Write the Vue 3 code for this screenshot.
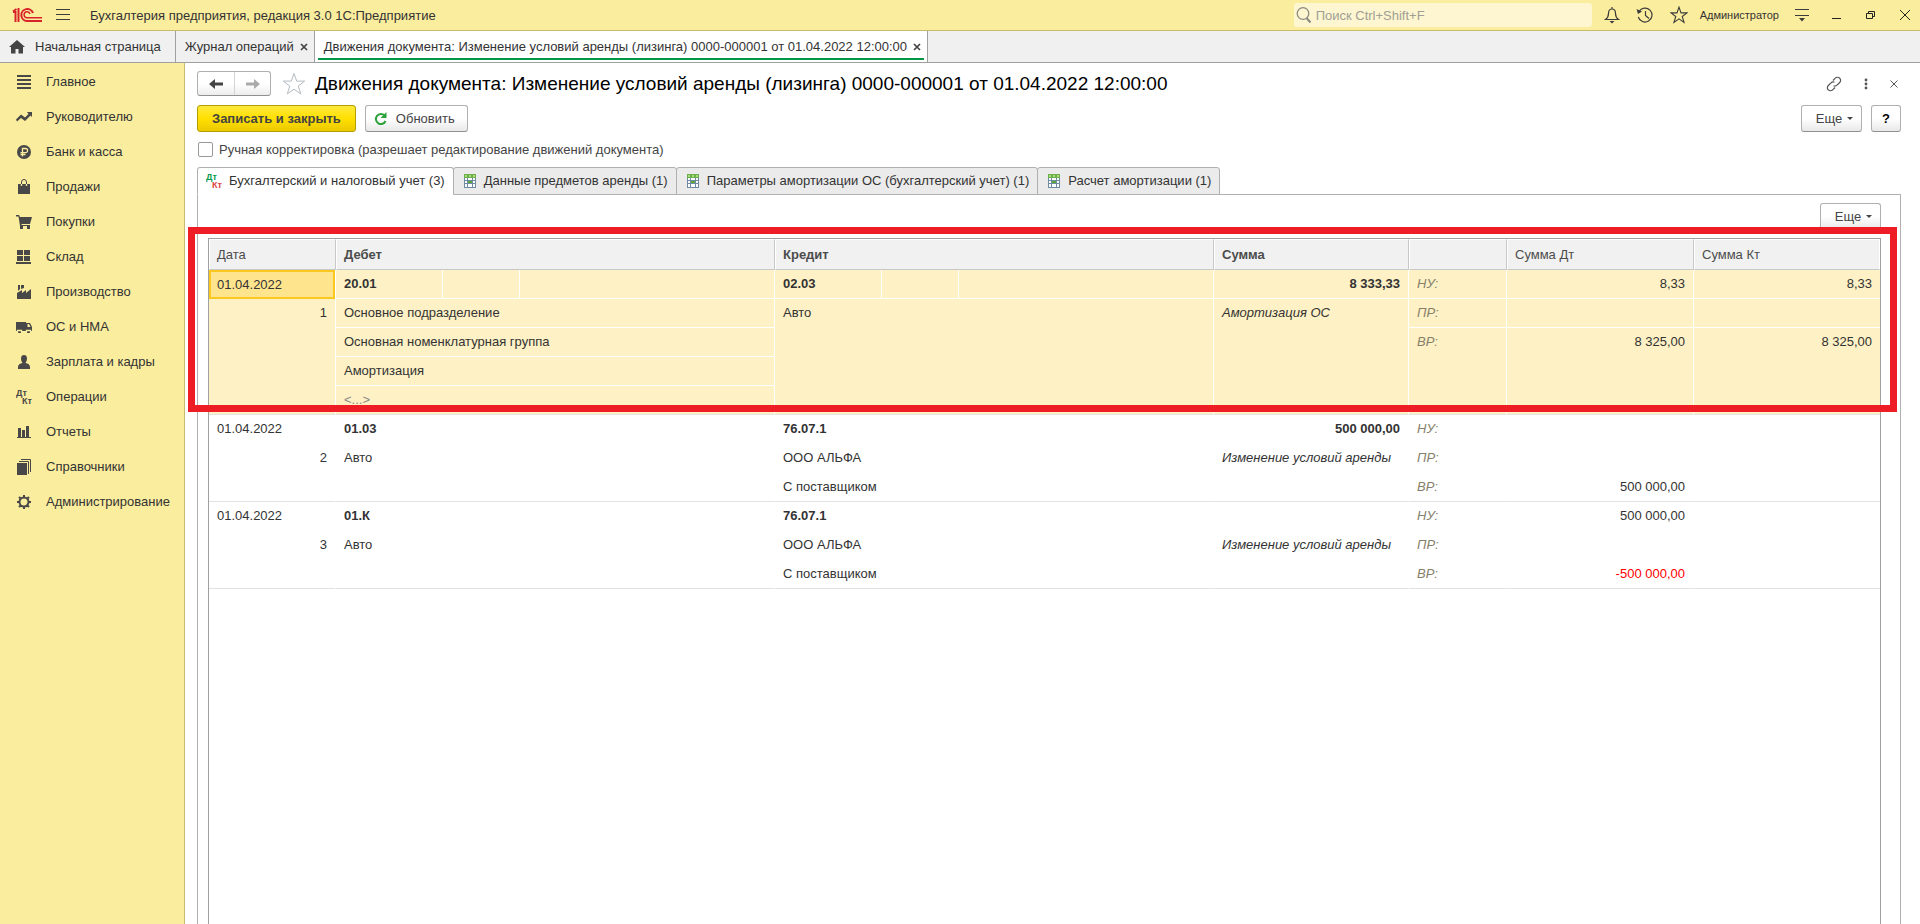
<template>
  <div class="app">
    <header class="titlebar">
      <svg class="logo" viewBox="0 0 30 16" fill="none" stroke="#d8232a" stroke-width="2">
        <path d="M1 4.500L4.500 2M6.500 1v14M1 5h2.500v10" />
        <path d="M21 6a6 6 0 1 0-6 8H30" />
        <path d="M18 7a3 3 0 1 0-3 3.800H30" stroke-width="1.500" />
      </svg>
      <button class="plain" aria-label="Меню">
        <svg width="14" height="12" viewBox="0 0 14 12" stroke="#3c3c3c" stroke-width="1">
          <path d="M0 .5h14M0 5.500h14M0 10.500h14" />
        </svg>
      </button>
      <span class="app-name">Бухгалтерия предприятия, редакция 3.0 1С:Предприятие</span>
      <label class="search">
        <svg width="16" height="18" viewBox="0 0 16 18" fill="none" stroke="#8c8a80" stroke-width="1.300">
          <circle cx="7" cy="7.500" r="5.800" />
          <path d="M10.500 12l4 4.500" stroke-width="2" />
        </svg>
        <input v-model="search" type="text" placeholder="Поиск Ctrl+Shift+F" aria-label="Поиск" />
      </label>
      <div class="tools">
        <button class="plain" aria-label="Уведомления">
          <svg width="16" height="18" viewBox="0 0 16 18" fill="none" stroke="#3c3c3c" stroke-width="1.200">
            <path d="M1.500 13.500c2-1.500 3-3 3-6C4.500 4.500 6 3 8 3s3.500 1.500 3.500 4.500c0 3 1 4.500 3 6zM8 3V1" />
            <path d="M5.500 15h5L8 17.500z" fill="#3c3c3c" stroke="none" />
          </svg>
        </button>
        <button class="plain" aria-label="История">
          <svg width="18" height="18" viewBox="0 0 18 18" fill="none" stroke="#3c3c3c" stroke-width="1.200">
            <path d="M3 5.500a7 7 0 1 1-.7 5.500M9.500 5v4.500l3.500 3" />
            <path d="M.5 3l1.500 5 4-2.500z" fill="#3c3c3c" stroke="none" />
          </svg>
        </button>
        <button class="plain" aria-label="Избранное">
          <svg width="18" height="18" viewBox="0 0 24 24" fill="none" stroke="#3c3c3c" stroke-width="1.500">
            <path :d="star" />
          </svg>
        </button>
        <a class="user" href="#">Администратор</a>
        <button class="plain" aria-label="Настройки">
          <svg width="14" height="14" viewBox="0 0 14 14">
            <path d="M0 1h14v1H0zM0 7h14v1H0zM4 10h6l-3 3.500z" fill="#3c3c3c" />
          </svg>
        </button>
      </div>
      <div class="window-buttons">
        <button class="plain" aria-label="Свернуть">
          <svg width="10" height="10" viewBox="0 0 10 10"><path d="M0 8h9v1H0z" fill="#222" /></svg>
        </button>
        <button class="plain" aria-label="Развернуть">
          <svg width="10" height="10" viewBox="0 0 10 10" fill="none" stroke="#222">
            <path d="M.5 3.500h6v5h-6zM2.500 3V1.500h6v5H7" />
          </svg>
        </button>
        <button class="plain" aria-label="Закрыть">
          <svg width="10" height="10" viewBox="0 0 10 10" stroke="#222"><path d="M0 0l10 10M10 0L0 10" /></svg>
        </button>
      </div>
    </header>

    <nav class="tabs">
      <a class="tab home" href="#">
        <svg width="16" height="14" viewBox="0 0 16 14">
          <path d="M8 0l8 7h-2v6.500H9.500V9h-3v4.500H2V7H0z" fill="#444" />
        </svg>
        Начальная страница
      </a>
      <div v-for="tab in openTabs" :key="tab.title" class="tab" :class="{ current: tab.current }">
        <a href="#">{{ tab.title }}</a>
        <button class="plain" aria-label="Закрыть вкладку">
          <svg width="8" height="8" viewBox="0 0 8 8" stroke="#444" stroke-width="1.700"><path d="M1 1l6 6M7 1L1 7" /></svg>
        </button>
      </div>
    </nav>

    <div class="body">
      <aside class="sidebar">
        <a v-for="item in menu" :key="item.title" href="#">
          <svg width="16" height="16" viewBox="0 0 16 16">
            <template v-if="item.dtkt">
              <text x="0" y="7" class="dtkt">Дт</text>
              <text x="6" y="15" class="dtkt">Кт</text>
            </template>
            <path v-if="item.fill" :d="item.fill" fill="#484848" fill-rule="evenodd" />
            <path v-if="item.line" :d="item.line" fill="none" stroke="#484848" :stroke-width="item.width || 1" />
            <path v-if="item.cut" :d="item.cut" fill="none" stroke="#fbed9e" stroke-width="1.300" />
          </svg>
          {{ item.title }}
        </a>
      </aside>

      <main class="content">
        <div class="heading">
          <div class="history">
            <button aria-label="Назад">
              <svg width="14" height="10" viewBox="0 0 14 10"><path d="M0 5l6-5v3.500h8v3H6V10z" fill="#444" /></svg>
            </button>
            <button aria-label="Вперед">
              <svg width="14" height="10" viewBox="0 0 14 10"><path d="M14 5L8 0v3.500H0v3h8V10z" fill="#aaa" /></svg>
            </button>
          </div>
          <button class="plain" aria-label="В избранное">
            <svg width="24" height="24" viewBox="0 0 24 24" fill="none" stroke="#b4bac0"><path :d="star" /></svg>
          </button>
          <h1>{{ title }}</h1>
          <div class="form-tools">
            <button class="plain" aria-label="Ссылка">
              <svg width="16" height="16" viewBox="0 0 16 16" fill="none" stroke="#555" stroke-width="1.200">
                <path d="M7 4.500l2.300-2.300a3 3 0 0 1 4.400 0 3 3 0 0 1 0 4.300L11 9.200a3 3 0 0 1-3.500.5" />
                <path d="M9 11.500l-2.300 2.300a3 3 0 0 1-4.400 0 3 3 0 0 1 0-4.300L5 6.800a3 3 0 0 1 3.500-.5" />
              </svg>
            </button>
            <button class="plain" aria-label="Еще действия">
              <svg width="4" height="12" viewBox="0 0 4 12" fill="#555">
                <circle cx="2" cy="2" r="1.400" /><circle cx="2" cy="6" r="1.400" /><circle cx="2" cy="10" r="1.400" />
              </svg>
            </button>
            <button class="plain" aria-label="Закрыть форму">
              <svg width="8" height="8" viewBox="0 0 8 8" stroke="#555"><path d="M.5.5l7 7M7.500.5l-7 7" /></svg>
            </button>
          </div>
        </div>

        <div class="commands">
          <button class="btn primary">Записать и закрыть</button>
          <button class="btn refresh">
            <svg width="14" height="14" viewBox="0 0 14 14">
              <path d="M10.500 3.500A5 5 0 1 0 11.500 9" fill="none" stroke="#2ba33a" stroke-width="2" />
              <path d="M12.500 0v6h-6z" fill="#2ba33a" />
            </svg>
            Обновить
          </button>
          <button class="btn more">Еще <i class="caret"></i></button>
          <button class="btn help">?</button>
        </div>

        <label class="manual">
          <input v-model="manual" type="checkbox" />
          Ручная корректировка (разрешает редактирование движений документа)
        </label>

        <div class="registers" role="tablist">
          <button
            v-for="(reg, i) in registers"
            :key="reg"
            role="tab"
            :class="{ active: activeRegister === i }"
            @click="activeRegister = i"
          >
            <svg v-if="i === 0" width="18" height="16" viewBox="0 0 18 16">
              <text x="0" y="7" class="dtkt" fill="#0a9a4a">Дт</text>
              <text x="6" y="15" class="dtkt" fill="#dc4444">Кт</text>
            </svg>
            <svg v-else width="14" height="14" viewBox="0 0 14 14">
              <path d="M1 0h12v14H1z" fill="#6f8ba3" />
              <path d="M1 0h12v4H1z" fill="#6cae48" />
              <path d="M2 1h2v2H2zM6 1h2v2H6zM10 1h2v2h-2z" fill="#a9dc80" />
              <path d="M2 4h2v2H2zM5 4h4v2H5zM10 4h2v2h-2zM2 7h2v2H2zM10 7h2v2h-2zM2 10h2v3H2zM5 10h4v3H5zM10 10h2v3h-2z" fill="#fff" />
              <path d="M5 7h4v2H5z" fill="#5aa83c" />
            </svg>
            {{ reg }}
          </button>
        </div>

        <section class="panel">
          <div class="panel-commands">
            <button class="btn more">Еще <i class="caret"></i></button>
          </div>
          <div class="grid">
            <table>
              <colgroup>
                <col class="c-date" />
                <col />
                <col />
                <col class="c-sum" />
                <col class="c-kind" />
                <col class="c-amount" />
                <col class="c-last" />
              </colgroup>
              <thead>
                <tr>
                  <th>Дата</th>
                  <th class="strong">Дебет</th>
                  <th class="strong">Кредит</th>
                  <th class="strong">Сумма</th>
                  <th></th>
                  <th>Сумма Дт</th>
                  <th>Сумма Кт</th>
                </tr>
              </thead>
              <tbody>
                <tr v-for="row in entries" :key="row.n" :class="{ selected: selected === row.n }" @click="selected = row.n">
                  <td>
                    <div class="line date">{{ row.date }}</div>
                    <div class="line num last">{{ row.n }}</div>
                  </td>
                  <td v-for="(side, s) in [row.debit, row.credit]" :key="s">
                    <div class="line account"><b>{{ side[0] }}</b><span></span><span></span></div>
                    <div
                      v-for="(text, i) in side.slice(1)"
                      :key="i"
                      class="line"
                      :class="{ last: i === side.length - 2, blank: text === '<...>' }"
                    >{{ text }}</div>
                  </td>
                  <td>
                    <div class="line num"><b>{{ row.sum }}</b></div>
                    <div class="line last"><em>{{ row.note }}</em></div>
                  </td>
                  <td>
                    <div class="line kind">НУ:</div>
                    <div class="line kind">ПР:</div>
                    <div class="line kind last">ВР:</div>
                  </td>
                  <td v-for="(col, c) in [row.dt, row.kt]" :key="'a' + c">
                    <div
                      v-for="(value, i) in col"
                      :key="i"
                      class="line num"
                      :class="{ last: i === 2, negative: value.startsWith('-') }"
                    >{{ value }}</div>
                  </td>
                </tr>
              </tbody>
            </table>
            <div class="highlight"></div>
          </div>
        </section>
      </main>
    </div>
  </div>
</template>

<script setup>
import { ref } from 'vue';

const title = 'Движения документа: Изменение условий аренды (лизинга) 0000-000001 от 01.04.2022 12:00:00';
const star = 'M12 1.500l2.700 7.600h8l-6.400 4.900 2.400 7.900L12 17.200l-6.700 4.700 2.400-7.900L1.300 9.100h8z';

const search = ref('');
const manual = ref(false);
const activeRegister = ref(0);
const selected = ref(1);

const openTabs = [
  { title: 'Журнал операций' },
  { title, current: true }
];

// fill - заливка, line - контур, cut - линии цветом фона
const menu = [
  { title: 'Главное', fill: 'M1 1h14v2H1zM1 5h14v2H1zM1 9h14v2H1zM1 13h14v2H1z' },
  { title: 'Руководителю', fill: 'M0 10.500l5-5 4 3 3.500-3.500L11 3h5v5l-1.500-1.500L9 12 5 9l-4 3.500z' },
  { title: 'Банк и касса', fill: 'M8 1a7 7 0 1 0 0 14A7 7 0 0 0 8 1z', cut: 'M6.500 12.500V4.500h3a2 2 0 0 1 0 4.200H4.500M4.500 10.500h5' },
  { title: 'Продажи', fill: 'M2 5h12v10H2z', line: 'M5.500 5V3a2.500 2.500 0 0 1 5 0v2', cut: 'M5.500 5v2M10.500 5v2' },
  { title: 'Покупки', fill: 'M0 1h3l1 2h12l-2 7H5.500v1H14v1H4L2.500 2.500H0zM4 12h3v3H4zM11 12h3v3h-3z' },
  { title: 'Склад', fill: 'M1 1h6v5H1zM8 1h6v5H8zM1 7h6v5H1zM8 7h6v5H8zM0 13h15v2H0z' },
  { title: 'Производство', fill: 'M1 15V9l5-3v3l4-3v3l5-4v10zM2 1h2v4l-2 2zM5 1h3v3L5 5z' },
  { title: 'ОС и НМА', fill: 'M0 3h10v9H0zM10 4h4l2 4v4h-6zM11.500 5v3h3L13 5zM2 11h3v3H2zM11 11h3v3h-3z', cut: 'M1.500 13.500v-2h4v2M10.500 13.500v-2h4v2' },
  { title: 'Зарплата и кадры', fill: 'M8 1c2 0 3 1.500 3 3.500S10 8.500 9.500 9c2.500.5 4.500 1.500 4.500 4v2H2v-2c0-2.500 2-3.500 4.500-4C6 8.500 5 6.500 5 4.500S6 1 8 1z' },
  { title: 'Операции', dtkt: true },
  { title: 'Отчеты', fill: 'M2 4h3v9H2zM6 6h3v7H6zM10 2h3v11h-3zM1 13h14v1H1z' },
  { title: 'Справочники', fill: 'M1 4h10v12H1z', line: 'M3 2.500h9.500V15M5 .5h9.500V13' },
  { title: 'Администрирование', line: 'M8 3.500a4.500 4.500 0 1 0 0 9 4.500 4.500 0 0 0 0-9zM8 1v2.500M8 12.500V15M1 8h2.500M12.500 8H15M3 3l2 2M11 11l2 2M13 3l-2 2M5 11l-2 2', width: 2 }
];

const registers = [
  'Бухгалтерский и налоговый учет (3)',
  'Данные предметов аренды (1)',
  'Параметры амортизации ОС (бухгалтерский учет) (1)',
  'Расчет амортизации (1)'
];

const entries = [
  {
    n: 1,
    date: '01.04.2022',
    debit: ['20.01', 'Основное подразделение', 'Основная номенклатурная группа', 'Амортизация', '<...>'],
    credit: ['02.03', 'Авто'],
    sum: '8 333,33',
    note: 'Амортизация ОС',
    dt: ['8,33', '', '8 325,00'],
    kt: ['8,33', '', '8 325,00']
  },
  {
    n: 2,
    date: '01.04.2022',
    debit: ['01.03', 'Авто'],
    credit: ['76.07.1', 'ООО АЛЬФА', 'С поставщиком'],
    sum: '500 000,00',
    note: 'Изменение условий аренды',
    dt: ['', '', '500 000,00'],
    kt: ['', '', '']
  },
  {
    n: 3,
    date: '01.04.2022',
    debit: ['01.К', 'Авто'],
    credit: ['76.07.1', 'ООО АЛЬФА', 'С поставщиком'],
    sum: '',
    note: 'Изменение условий аренды',
    dt: ['500 000,00', '', '-500 000,00'],
    kt: ['', '', '']
  }
];
</script>

<style>
body {
  margin: 0;
  background: #fff;
}
</style>

<style scoped>
.app {
  display: flex;
  flex-direction: column;
  height: 100vh;
  overflow: hidden;
  font-family: "Liberation Sans", Arial, sans-serif;
  font-size: 13px;
  color: #333;
}

.app * {
  box-sizing: border-box;
}

button,
input {
  font: inherit;
  color: inherit;
}

a {
  color: inherit;
  text-decoration: none;
}

svg {
  display: block;
  flex: none;
}

.plain {
  padding: 0;
  border: none;
  background: none;
  cursor: pointer;
}

.dtkt {
  font-size: 9px;
  font-weight: bold;
}

/* Верхняя панель */
.titlebar {
  display: flex;
  align-items: center;
  flex: none;
  height: 31px;
  padding: 0 10px 0 12px;
  background: #fbed9e;
  border-bottom: 1px solid #c8bc6c;
}

.logo {
  width: 30px;
  height: 16px;
  margin-right: 14px;
}

.app-name {
  margin-left: 20px;
}

.search {
  display: flex;
  align-items: center;
  gap: 4px;
  width: 298px;
  height: 24px;
  margin-left: auto;
  padding-left: 2px;
  border-radius: 3px;
  background: #fdf6d0;
}

.search input {
  flex: 1;
  min-width: 0;
  padding: 0;
  border: none;
  outline: none;
  background: none;
}

.search input::placeholder {
  color: #a09e94;
}

.tools {
  display: flex;
  align-items: center;
  gap: 16px;
  margin-left: 12px;
}

.user {
  margin: 0 0 0 -4px;
  font-size: 11px;
}

.window-buttons {
  display: flex;
  gap: 24px;
  margin-left: 23px;
}

/* Открытые вкладки */
.tabs {
  display: flex;
  flex: none;
  height: 32px;
  background: #f0f0f0;
  border-bottom: 1px solid #a0a0a0;
}

.tab {
  position: relative;
  display: flex;
  align-items: center;
  gap: 6px;
  padding: 0 6px 0 9px;
  border-right: 1px solid #a0a0a0;
}

.home {
  gap: 10px;
  padding-right: 14px;
}

.current {
  background: #fff;
}

.current::after {
  content: "";
  position: absolute;
  left: 3px;
  right: 3px;
  bottom: 2px;
  height: 2px;
  background: #009646;
}

.body {
  display: flex;
  flex: 1;
  min-height: 0;
}

.sidebar {
  flex: none;
  width: 185px;
  padding-top: 1px;
  background: #fbed9e;
  border-right: 1px solid #c8bc6c;
}

.sidebar a {
  display: flex;
  align-items: center;
  gap: 14px;
  height: 35px;
  padding-left: 16px;
}

.sidebar .dtkt {
  fill: #484848;
}

/* Форма */
.content {
  display: flex;
  flex-direction: column;
  flex: 1;
  min-width: 0;
  padding: 8px 19px 0 12px;
}

.heading {
  display: flex;
  align-items: center;
  height: 25px;
}

.history {
  display: flex;
  margin-right: 11px;
  border: 1px solid #b0b0b0;
  border-bottom-color: #909090;
  border-radius: 3px;
  background: linear-gradient(#fff 50%, #ededed);
}

.history button {
  display: flex;
  align-items: center;
  justify-content: center;
  width: 36px;
  height: 23px;
  padding: 0;
  border: none;
  background: none;
}

.history button + button {
  border-left: 1px solid #d4d4d4;
}

h1 {
  margin: 0 0 0 9px;
  font-size: 19px;
  font-weight: normal;
  color: #000;
}

.form-tools {
  display: flex;
  align-items: center;
  gap: 22px;
  margin-left: auto;
  padding-right: 3px;
}

.commands {
  display: flex;
  gap: 9px;
  margin-top: 9px;
}

.btn {
  display: flex;
  align-items: center;
  justify-content: center;
  height: 27px;
  padding: 0 12px;
  border: 1px solid #b0b0b0;
  border-bottom-color: #909090;
  border-radius: 3px;
  background: linear-gradient(#fff 50%, #e8e8e8);
  color: #444;
}

.primary {
  padding: 0 14px;
  border-color: #b39d00;
  background: linear-gradient(#ffe93c, #ffe000 50%, #ecc900);
  font-weight: bold;
}

.refresh {
  gap: 8px;
  padding: 0 12px 0 8px;
}

.more {
  gap: 5px;
  width: 61px;
  padding: 0 4px 0 10px;
}

.commands .more {
  margin-left: auto;
}

.caret {
  border: 3px solid transparent;
  border-top-color: #444;
  border-bottom: none;
}

.help {
  width: 30px;
  padding: 0;
  color: #000;
  font-weight: bold;
}

.manual {
  display: flex;
  align-items: center;
  gap: 6px;
  align-self: flex-start;
  margin-top: 10px;
  color: #444;
}

.manual input {
  appearance: none;
  width: 15px;
  height: 15px;
  margin: 0 0 0 1px;
  border: 1px solid #999;
  border-radius: 2px;
  background: #fff;
}

.manual input:checked {
  background: #009646;
}

.registers {
  display: flex;
  position: relative;
  z-index: 1;
  margin-top: 10px;
  margin-bottom: -1px;
}

.registers button {
  display: flex;
  align-items: center;
  gap: 7px;
  height: 28px;
  margin-right: -1px;
  padding: 0 8px 1px 9px;
  border: 1px solid #b0b0b0;
  border-radius: 3px 3px 0 0;
  background: #ebebeb;
}

.registers .active {
  gap: 5px;
  padding-left: 8px;
  border-bottom-color: #fff;
  background: #fff;
}

.panel {
  display: flex;
  flex-direction: column;
  flex: 1;
  min-height: 0;
  padding: 8px 19px 0 10px;
  border: 1px solid #b0b0b0;
  border-bottom: none;
}

.panel-commands {
  display: flex;
  justify-content: flex-end;
}

.grid {
  position: relative;
  flex: 1;
  margin-top: 8px;
  border: 1px solid #a0a0a0;
  border-bottom: none;
}

/* Рамка вокруг шапки и первой проводки */
.highlight {
  position: absolute;
  top: -12px;
  left: -21px;
  right: -17px;
  height: 185px;
  border: 7px solid #ee1c24;
  pointer-events: none;
}

table {
  width: 100%;
  table-layout: fixed;
  border-collapse: separate;
  border-spacing: 0;
}

.c-date {
  width: 127px;
}

.c-sum {
  width: 195px;
}

.c-kind {
  width: 98px;
}

.c-amount {
  width: 187px;
}

.c-last {
  width: 186px;
}

th {
  height: 31px;
  padding: 0 7px;
  border: 1px solid #fff;
  border-right-color: #c8c8c8;
  border-bottom-color: #c8c8c8;
  background: #f1f1f1;
  color: #4c4c4c;
  font-weight: normal;
  text-align: left;
}

th:last-child {
  border-right-color: #fff;
}

.strong {
  font-weight: bold;
}

td {
  padding: 0;
  border-bottom: 1px solid #e2e2e2;
  border-right: 1px solid transparent;
  vertical-align: top;
}

td:last-child {
  border-right: none;
}

.line {
  height: 29px;
  padding: 0 8px;
  border-bottom: 1px solid transparent;
  line-height: 28px;
  white-space: nowrap;
}

.line.last {
  height: 28px;
  border-bottom: none;
}

.num {
  text-align: right;
}

.account {
  display: flex;
}

.account b {
  width: 98px;
}

.account span {
  width: 77px;
  border-left: 1px solid transparent;
}

.kind {
  color: #85806a;
  font-style: italic;
}

.blank {
  color: #888;
}

.negative {
  color: #f00;
}

.selected td {
  background: #fef1c5;
  border-right-color: #fff;
}

.selected .line:not(.last),
.selected .account span {
  border-color: #fff;
}

.selected .date {
  padding: 0 6px;
  border: 2px solid #fac81e;
  background: #ffe48e;
  line-height: 25px;
}

.selected .line.date {
  border-color: #fac81e;
}
</style>
